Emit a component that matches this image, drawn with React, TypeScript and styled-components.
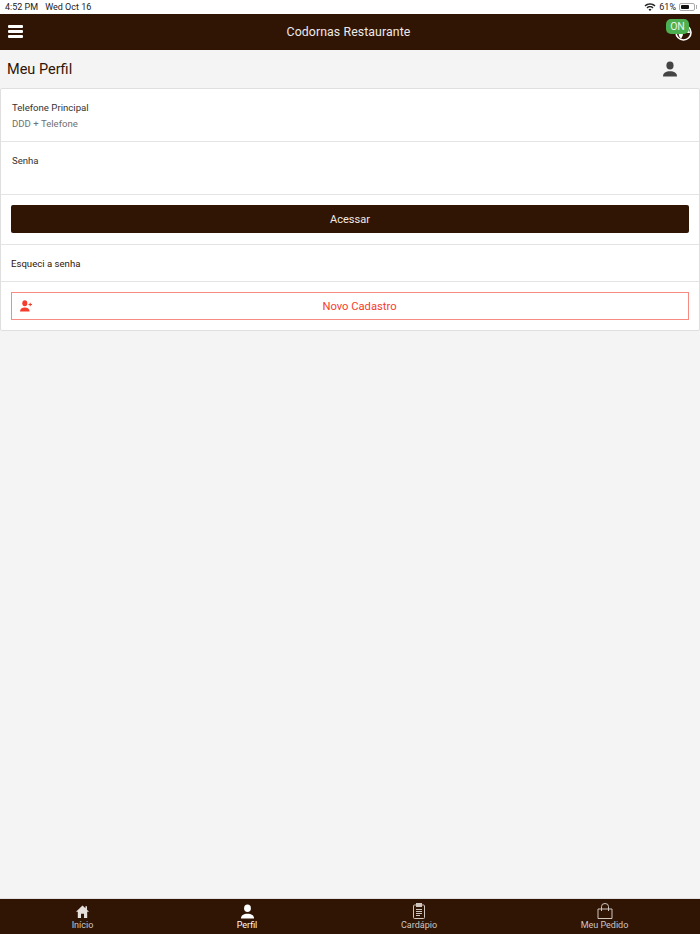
import React from 'react';
import styled, { createGlobalStyle } from 'styled-components';
import { MdWifi } from 'react-icons/md';

const GlobalStyle = createGlobalStyle`
  html, body {
    margin: 0;
    padding: 0;
    background: #f4f4f4;
    font-family: Roboto, "Liberation Sans", Arial, sans-serif;
  }
  * {
    box-sizing: border-box;
  }
`;

const Page = styled.div`
  display: flex;
  flex-direction: column;
  width: 700px;
  height: 934px;
  overflow: hidden;
`;

const StatusBar = styled.div`
  display: flex;
  align-items: center;
  justify-content: space-between;
  height: 14px;
  padding: 0 4px 0 5px;
  background: #fff;
  color: #222;
  font-size: 9px;
`;

const StatusGroup = styled.div<{ $gap: number }>`
  display: flex;
  align-items: center;
  gap: ${(p) => p.$gap}px;
`;

const Battery = styled.div`
  position: relative;
  display: flex;
  align-items: center;
  width: 16px;
  height: 8px;
  margin-right: 1px;
  padding: 1px;
  border: 1px solid #aaa;
  border-radius: 2px;
  span {
    display: block;
    width: 8px;
    height: 100%;
    background: #111;
    border-radius: 1px;
  }
  &::after {
    content: '';
    position: absolute;
    right: -3px;
    top: 1px;
    width: 1px;
    height: 4px;
    background: #aaa;
  }
`;

const Header = styled.header`
  position: relative;
  display: flex;
  align-items: center;
  justify-content: center;
  height: 36px;
  padding-right: 3px;
  background: #301505;
  color: #efeae6;
  font-size: 12.3px;
`;

const Burger = styled.div`
  position: absolute;
  left: 8px;
  top: 11px;
  display: flex;
  flex-direction: column;
  gap: 2px;
  span {
    display: block;
    width: 15px;
    height: 3px;
    border-radius: 1px;
    background: #fff;
  }
`;

const Title = styled.div`
  letter-spacing: 0.1px;
`;

const Globe = styled.svg`
  position: absolute;
  left: 675px;
  top: 10px;
  width: 17px;
  height: 17px;
`;

const OnBadge = styled.div`
  position: absolute;
  left: 666px;
  top: 5px;
  width: 23px;
  height: 15px;
  border-radius: 5px;
  background: #4caf50;
  color: #e8f5e9;
  font-size: 10.5px;
  line-height: 15px;
  text-align: center;
`;

const SubHeader = styled.div`
  display: flex;
  align-items: center;
  justify-content: space-between;
  height: 38px;
  padding: 0 22px 0 7px;
  color: #301505;
  font-size: 14.5px;
`;

const Main = styled.main`
  flex: 1;
`;

const Card = styled.section`
  background: #fff;
  border: 1px solid #dfdfdf;
  border-radius: 2px;
`;

const Row = styled.div<{ $height: number; $center?: boolean }>`
  display: flex;
  flex-direction: column;
  justify-content: ${(p) => (p.$center ? 'center' : 'flex-start')};
  height: ${(p) => p.$height}px;
  padding: ${(p) => (p.$center ? '0 10px' : '12px 11px 0')};
  border-bottom: 1px solid #e4e4e4;
  &:last-child {
    border-bottom: none;
  }
`;

const Label = styled.div`
  color: #333;
  font-size: 9.6px;
  line-height: 14px;
`;

const Placeholder = styled.div`
  margin-top: 2px;
  color: #707070;
  font-size: 9.6px;
  line-height: 14px;
`;

const PrimaryButton = styled.button`
  width: 100%;
  height: 28px;
  margin-bottom: 1px;
  border: none;
  border-radius: 2px;
  background: #301505;
  color: #efeae6;
  font-family: inherit;
  font-size: 11px;
`;

const LinkText = styled.div`
  color: #301505;
  font-size: 9.6px;
`;

const OutlineButton = styled.button`
  position: relative;
  display: flex;
  align-items: center;
  justify-content: center;
  width: 100%;
  height: 28px;
  padding-left: 25px;
  border: 1px solid #f88a84;
  background: #fff;
  color: #f53d2d;
  font-family: inherit;
  font-size: 11.2px;
  svg {
    position: absolute;
    left: 8px;
    top: 7px;
  }
`;

const TabBar = styled.nav`
  display: grid;
  grid-template-columns: 165px 164px 180px 191px;
  height: 36px;
  border-top: 1px solid #e0e0e0;
  background: #301505;
`;

const Tab = styled.div<{ $active?: boolean }>`
  display: flex;
  flex-direction: column;
  align-items: center;
  padding-top: 4px;
  color: ${(p) => (p.$active ? '#fff' : '#cfc6c0')};
  font-size: 9px;
  line-height: 10px;
`;

const TabIcon = styled.div`
  display: flex;
  align-items: center;
  justify-content: center;
  height: 16px;
  margin-bottom: 1px;
`;

function PersonIcon({ size, color }: { size: number; color: string }) {
  return (
    <svg width={size} height={size} viewBox="0 0 16 16" fill={color}>
      <ellipse cx="8" cy="4.4" rx="3.6" ry="4" />
      <path d="M1 15.5c0-3.6 3-5.2 7-5.2s7 1.6 7 5.2z" />
    </svg>
  );
}

export default function App() {
  return (
    <Page>
      <GlobalStyle />
      <StatusBar>
        <StatusGroup $gap={7}>
          <span>4:52 PM</span>
          <span>Wed Oct 16</span>
        </StatusGroup>
        <StatusGroup $gap={3}>
          <MdWifi size={12} />
          <span>61%</span>
          <Battery>
            <span />
          </Battery>
        </StatusGroup>
      </StatusBar>
      <Header>
        <Burger>
          <span />
          <span />
          <span />
        </Burger>
        <Title>Codornas Restaurante</Title>
        <Globe viewBox="0 0 17 17">
          <circle cx="8.5" cy="8.5" r="7.5" fill="#301505" stroke="#fff" strokeWidth="1.6" />
          <path d="M3 7l4 1 1 3-2 4-2-3zM10 3l4 2 1 4-4 0-2-3z" fill="#fff" />
        </Globe>
        <OnBadge>ON</OnBadge>
      </Header>
      <SubHeader>
        <span>Meu Perfil</span>
        <PersonIcon size={16} color="#444" />
      </SubHeader>
      <Main>
        <Card>
          <Row $height={53}>
            <Label>Telefone Principal</Label>
            <Placeholder>DDD + Telefone</Placeholder>
          </Row>
          <Row $height={53}>
            <Label>Senha</Label>
          </Row>
          <Row $height={50} $center>
            <PrimaryButton>Acessar</PrimaryButton>
          </Row>
          <Row $height={37} $center>
            <LinkText>Esqueci a senha</LinkText>
          </Row>
          <Row $height={48} $center>
            <OutlineButton>
              <svg width="12" height="12" viewBox="0 0 12 12" fill="#f53d2d">
                <ellipse cx="4.8" cy="3.2" rx="2.5" ry="3" />
                <path d="M0 11.5c0-2.6 2-3.9 4.8-3.9s4.8 1.3 4.8 3.9z" />
                <path d="M8.5 4h1.2V2.8h1V4H12v1h-1.3v1.2h-1V5H8.5z" />
              </svg>
              Novo Cadastro
            </OutlineButton>
          </Row>
        </Card>
      </Main>
      <TabBar>
        <Tab>
          <TabIcon>
            <svg width="13" height="13" viewBox="0 0 13 13" fill="#e6e0dc">
              <path d="M6.5 0.5L0 6.8h1.8V13h3.2V8.8h3V13h3.2V6.8H13l-2-2V1.2H9.4v2z" />
            </svg>
          </TabIcon>
          Início
        </Tab>
        <Tab $active>
          <TabIcon>
            <PersonIcon size={15} color="#fff" />
          </TabIcon>
          Perfil
        </Tab>
        <Tab>
          <TabIcon>
            <svg width="14" height="16" viewBox="0 0 14 16" fill="none" stroke="#cfc6c0" strokeWidth="1">
              <rect x="1.5" y="2" width="11" height="13.5" rx="1" />
              <rect x="4.5" y="0.5" width="5" height="3" fill="#cfc6c0" />
              <path d="M4 6.5h6M4 8.5h6M4 10.5h6M4 12.5h4" />
            </svg>
          </TabIcon>
          Cardápio
        </Tab>
        <Tab>
          <TabIcon>
            <svg width="16" height="16" viewBox="0 0 16 16" fill="none" stroke="#cfc6c0" strokeWidth="1">
              <path d="M1 6h14v9.5H1z" />
              <path d="M4.5 8V3.5a3.5 3 0 0 1 7 0V8" />
            </svg>
          </TabIcon>
          Meu Pedido
        </Tab>
      </TabBar>
    </Page>
  );
}
